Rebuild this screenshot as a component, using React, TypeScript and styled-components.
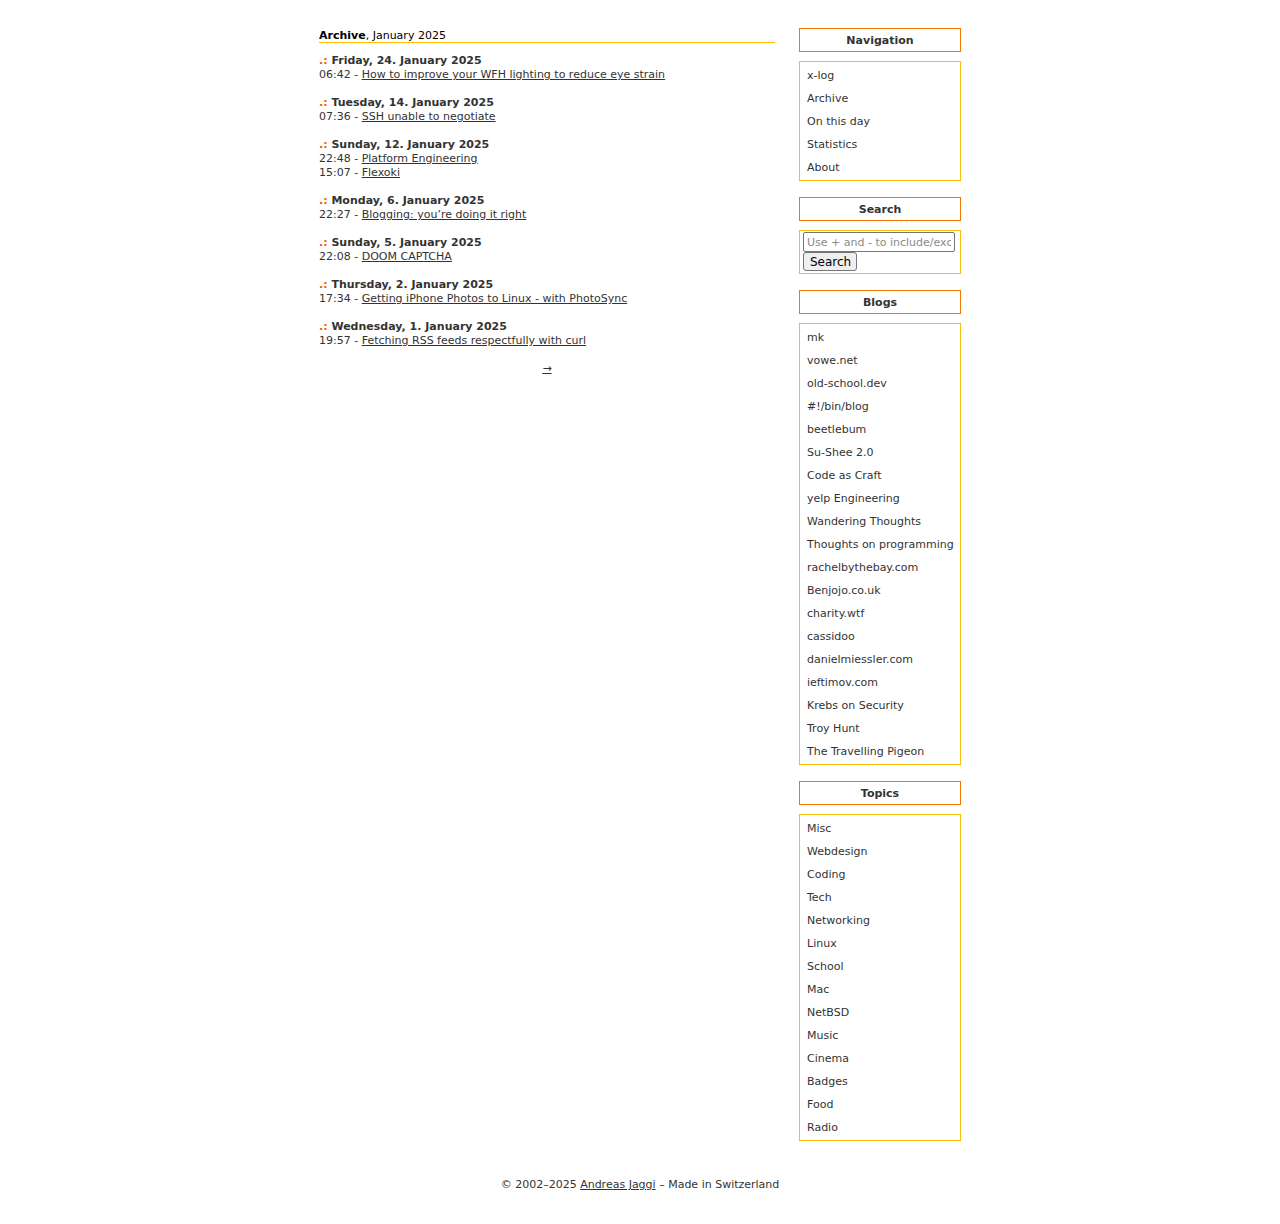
import React from "react";
import styled, { createGlobalStyle } from "styled-components";

const GlobalStyle = createGlobalStyle`
  html, body {
    margin: 0;
    padding: 0;
    background: #ffffff;
  }
  body {
    font-family: Verdana, "DejaVu Sans", sans-serif;
    font-size: 11px;
    color: #333333;
  }
`;

const Page = styled.div`
  width: 642px;
  margin: 0 auto;
  padding-top: 28px;
  display: flex;
  align-items: flex-start;
  gap: 24px;
`;

const Main = styled.main`
  width: 456px;
  flex: none;
  padding-top: 1px;
`;

const ArchiveTitle = styled.h1`
  margin: 0 0 11px;
  font-size: 11px;
  font-weight: normal;
  line-height: 13px;
  color: #000000;
  border-bottom: 1px solid #f9bc00;
  strong {
    font-weight: bold;
  }
`;

const Day = styled.section`
  margin-bottom: 14px;
  line-height: 14px;
`;

const DayTitle = styled.h2`
  margin: 0;
  font-size: 11px;
  line-height: 14px;
  font-weight: bold;
  color: #333333;
`;

const Marker = styled.span`
  color: #f25c05;
`;

const Entry = styled.div`
  line-height: 14px;
`;

const Link = styled.a`
  color: #333333;
  text-decoration: underline;
`;

const Pager = styled.p`
  margin: 0;
  text-align: center;
  line-height: 14px;
  a {
    color: #333333;
  }
`;

const Sidebar = styled.aside`
  width: 162px;
  flex: none;
`;

const BoxTitle = styled.h3`
  margin: 0 0 9px;
  padding-top: 1px;
  border: 1px solid #f57600;
  line-height: 21px;
  font-size: 11px;
  font-weight: bold;
  text-align: center;
  color: #333333;
`;

const ListBox = styled.ul<{ $last?: boolean }>`
  margin: 0 0 ${(p) => (p.$last ? 0 : 16)}px;
  padding: 2px 0 1px;
  list-style: none;
  border: 1px solid #fbbd0c;
`;

const ListItem = styled.li`
  line-height: 23px;
  padding-left: 7px;
  white-space: nowrap;
  a {
    color: #333333;
    text-decoration: none;
  }
`;

const SearchBox = styled.form`
  margin: 0 0 16px;
  padding: 1px 3px 2px;
  border: 1px solid #fbbd0c;
  display: flex;
  flex-direction: column;
  align-items: flex-start;
`;

const SearchInput = styled.input`
  box-sizing: border-box;
  width: 152px;
  height: 20px;
  margin: 0;
  padding: 1px 3px;
  border: 1px solid #767676;
  border-radius: 2px;
  font-family: Verdana, "DejaVu Sans", sans-serif;
  font-size: 11px;
  color: #333;
  &::placeholder {
    color: #8a8a8a;
  }
`;

const SearchButton = styled.button`
  box-sizing: border-box;
  height: 19px;
  width: 54px;
  margin: 0;
  padding: 0 6px;
  border: 1px solid #767676;
  border-radius: 3px;
  background: #efefef;
  font-family: Verdana, "DejaVu Sans", sans-serif;
  font-size: 12px;
  color: #000;
`;

const Footer = styled.footer`
  margin-top: 37px;
  padding-bottom: 32px;
  text-align: center;
  line-height: 14px;
  color: #333333;
  a {
    color: #333333;
  }
`;

const days = [
  { title: "Friday, 24. January 2025", entries: [["06:42", "How to improve your WFH lighting to reduce eye strain"]] },
  { title: "Tuesday, 14. January 2025", entries: [["07:36", "SSH unable to negotiate"]] },
  {
    title: "Sunday, 12. January 2025",
    entries: [
      ["22:48", "Platform Engineering"],
      ["15:07", "Flexoki"],
    ],
  },
  { title: "Monday, 6. January 2025", entries: [["22:27", "Blogging: you\u2019re doing it right"]] },
  { title: "Sunday, 5. January 2025", entries: [["22:08", "DOOM CAPTCHA"]] },
  { title: "Thursday, 2. January 2025", entries: [["17:34", "Getting iPhone Photos to Linux - with PhotoSync"]] },
  { title: "Wednesday, 1. January 2025", entries: [["19:57", "Fetching RSS feeds respectfully with curl"]] },
];

const nav = ["x-log", "Archive", "On this day", "Statistics", "About"];
const blogs = [
  "mk",
  "vowe.net",
  "old-school.dev",
  "#!/bin/blog",
  "beetlebum",
  "Su-Shee 2.0",
  "Code as Craft",
  "yelp Engineering",
  "Wandering Thoughts",
  "Thoughts on programming",
  "rachelbythebay.com",
  "Benjojo.co.uk",
  "charity.wtf",
  "cassidoo",
  "danielmiessler.com",
  "ieftimov.com",
  "Krebs on Security",
  "Troy Hunt",
  "The Travelling Pigeon",
];
const topics = [
  "Misc",
  "Webdesign",
  "Coding",
  "Tech",
  "Networking",
  "Linux",
  "School",
  "Mac",
  "NetBSD",
  "Music",
  "Cinema",
  "Badges",
  "Food",
  "Radio",
];

function LinkList({ items, last }: { items: string[]; last?: boolean }) {
  return (
    <ListBox $last={last}>
      {items.map((it) => (
        <ListItem key={it}>
          <a href="#">{it}</a>
        </ListItem>
      ))}
    </ListBox>
  );
}

export default function App() {
  return (
    <>
      <GlobalStyle />
      <Page>
        <Main>
          <ArchiveTitle>
            <strong>Archive</strong>, January 2025
          </ArchiveTitle>
          {days.map((d) => (
            <Day key={d.title}>
              <DayTitle>
                <Marker>.:</Marker> {d.title}
              </DayTitle>
              {d.entries.map(([t, l]) => (
                <Entry key={l}>
                  {t} - <Link href="#">{l}</Link>
                </Entry>
              ))}
            </Day>
          ))}
          <Pager>
            <a href="#">&rarr;</a>
          </Pager>
        </Main>
        <Sidebar>
          <BoxTitle>Navigation</BoxTitle>
          <LinkList items={nav} />
          <BoxTitle>Search</BoxTitle>
          <SearchBox onSubmit={(e) => e.preventDefault()}>
            <SearchInput type="text" placeholder="Use + and - to include/exclude words" />
            <SearchButton type="submit">Search</SearchButton>
          </SearchBox>
          <BoxTitle>Blogs</BoxTitle>
          <LinkList items={blogs} />
          <BoxTitle>Topics</BoxTitle>
          <LinkList items={topics} last />
        </Sidebar>
      </Page>
      <Footer>
        &copy; 2002&ndash;2025 <a href="#">Andreas Jaggi</a> &ndash; Made in Switzerland
      </Footer>
    </>
  );
}
